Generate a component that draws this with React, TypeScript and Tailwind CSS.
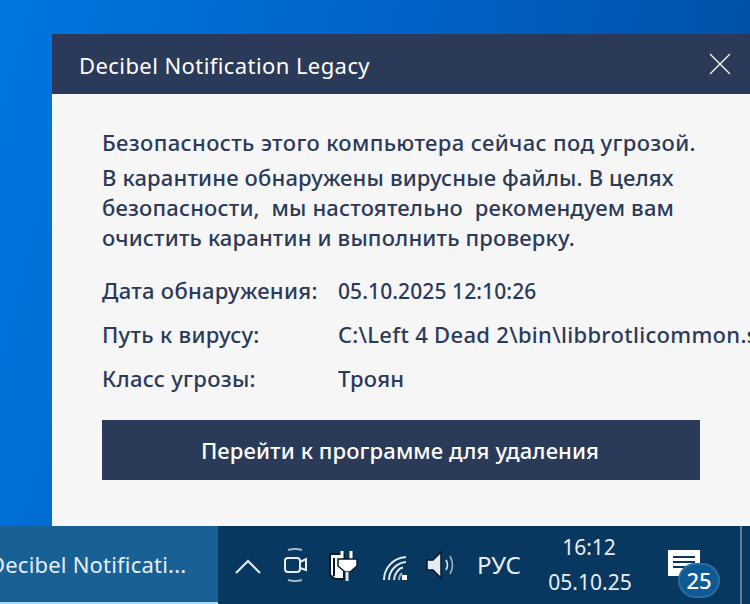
import React from 'react';

const font = "font-['Noto_Sans',sans-serif]";

const InfoRow = ({ label, children }: { label: string; children: React.ReactNode }) => (
  <div className="flex h-[44px] items-center whitespace-nowrap">
    <span className="w-[236px] shrink-0">{label}</span>
    {children}
  </div>
);

const TrayIcons = () => (
  <div className="flex items-center">
    {/* chevron */}
    <svg width="26" height="16" viewBox="0 0 26 16" fill="none" stroke="#e8eef4" strokeWidth="2" className="ml-[17px] mt-[2px]">
      <path d="M1 15 L13 3 L25 15" />
    </svg>
    {/* camera */}
    <svg width="24" height="34" viewBox="0 0 24 34" fill="none" stroke="#e8eef4" strokeWidth="2" className="ml-[23px]">
      <path d="M4 2 Q11 0 18 2" opacity=".7" />
      <rect x="1" y="10" width="15" height="14" rx="3" />
      <path d="M16 14 L22 11 V22 L16 20" />
      <path d="M4 32 Q11 34 18 32" opacity=".7" />
    </svg>
    {/* power */}
    <svg width="30" height="33" viewBox="0 0 30 33" className="ml-[20px]">
      <path d="M2 5 H16 V30 H7 L2 26 Z" fill="#fff" stroke="#04192c" strokeWidth="2" />
      <path d="M6 9 V27" stroke="#04192c" strokeWidth="2" />
      <path d="M14 2 V10 M23 2 V10" stroke="#fff" strokeWidth="3" />
      <path d="M10 10 H29 V17 L22 23 H17 L10 17 Z" fill="#fff" stroke="#04192c" strokeWidth="1.5" />
      <path d="M19 23 V32" stroke="#dfe5ea" strokeWidth="3" />
    </svg>
    {/* wifi */}
    <svg width="26" height="26" viewBox="0 0 26 26" fill="none" stroke="#e2e9ef" strokeWidth="2" className="ml-[24px] mt-[6px]">
      <path d="M2 25 C2 13 11 3 24 2" />
      <path d="M7 25 C7 16 14 8 24 7" />
      <path d="M12 25 C12 19 17 13 21 12.5" />
      <path d="M17 25 C17 21 19 19 20 18" opacity=".7" />
      <rect x="20" y="20" width="5" height="5" fill="#fff" stroke="none" />
    </svg>
    {/* speaker */}
    <svg width="30" height="30" viewBox="0 0 30 30" className="ml-[17px]">
      <path d="M2 10 H8 L16 2 V28 L8 20 H2 Z" fill="#e6ebef" stroke="#04192c" strokeWidth="1.5" />
      <path d="M21 10 Q24 15 21 20" fill="none" stroke="#dfe6ec" strokeWidth="1.6" />
      <path d="M25 6 Q30 15 25 24" fill="none" stroke="#9fb2c2" strokeWidth="1.6" />
    </svg>
  </div>
);

export default function App() {
  return (
    <div className={`flex h-[604px] w-[750px] flex-col overflow-hidden bg-[linear-gradient(105deg,#0076e0_0%,#0063c8_45%,#004a9a_100%)] ${font}`}>
      <div className="flex min-h-0 flex-1 flex-col pl-[52px] pt-[34px]">
        <div className="flex h-[60px] items-center justify-between bg-[#2b3a58] pl-[27px] pr-[19px] text-white">
          <span className="mt-[2px] text-[22px] leading-none tracking-[0.42px]">Decibel Notification Legacy</span>
          <svg width="22" height="22" viewBox="0 0 22 22" stroke="#fff" strokeWidth="1.3">
            <path d="M1 1 L21 21 M21 1 L1 21" />
          </svg>
        </div>
        <div className="flex-1 overflow-hidden bg-[#f6f6f6] pl-[50px] pt-[33px] text-[22px] font-medium tracking-[0.3px] text-[#2b3a58]">
          <p className="h-[35px] whitespace-nowrap leading-[30px] tracking-[0.38px]">Безопасность этого компьютера сейчас под угрозой.</p>
          <p className="whitespace-pre leading-[30px] tracking-[0.17px]">
            {'В карантине обнаружены вирусные файлы. В целях\nбезопасности,  мы настоятельно  рекомендуем вам\nочистить карантин и выполнить проверку.'}
          </p>
          <div className="pt-[16px]">
            <InfoRow label="Дата обнаружения:">
              <span className="mt-[3px] text-[21px] tracking-[0.1px]">05.10.2025 12:10:26</span>
            </InfoRow>
            <InfoRow label="Путь к вирусу:">
              <span>C:\Left 4 Dead 2\bin\libbrotlicommon.so</span>
            </InfoRow>
            <InfoRow label="Класс угрозы:">
              <span>Троян</span>
            </InfoRow>
          </div>
          <div className="mt-[20px] flex h-[60px] w-[598px] items-center justify-center bg-[#2b3a58] pr-[2px] tracking-[0.12px] text-white">
            Перейти к программе для удаления
          </div>
        </div>
      </div>
      <div className="flex h-[78px] items-center bg-[#08375f] text-[#e8eef4]">
        <div className="flex h-full w-[218px] shrink-0 items-center overflow-hidden border-b-2 border-[#a9d8f7] bg-[#186197]">
          <span className="ml-[-11px] whitespace-nowrap text-[22px] tracking-[0.2px]">Decibel Notificati...</span>
        </div>
        <TrayIcons />
        <span className="ml-[22px] w-[53px] text-[24px] tracking-[0.3px]">РУС</span>
        <div className="ml-[14px] flex w-[92px] flex-col items-center text-[21px] leading-[35px]">
          <span className="-ml-[2px]">16:12</span>
          <span>05.10.25</span>
        </div>
        <div className="relative ml-[32px] h-[52px] w-[52px] shrink-0">
          <div className="mt-[11px] flex h-[26px] w-[32px] flex-col gap-[3px] bg-white px-[5px] pt-[6px]">
            <div className="h-[2px] bg-[#08375f]" />
            <div className="h-[2px] bg-[#08375f]" />
            <div className="h-[2px] w-[14px] bg-[#08375f]" />
          </div>
          <div className="absolute left-[10px] top-[24px] flex h-[35px] w-[42px] items-center justify-center rounded-full border-2 border-[#2a6ea3] bg-[#0e5a94] text-[22px] font-medium text-white">
            25
          </div>
        </div>
        <div className="ml-[20px] h-full w-[2px] shrink-0 bg-[#5f7f9b]" />
      </div>
    </div>
  );
}
